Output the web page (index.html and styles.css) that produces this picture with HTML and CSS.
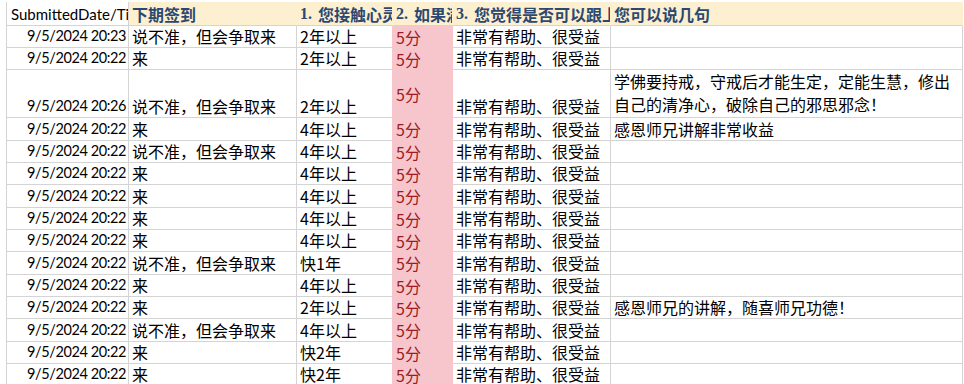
FILE: index.html
```html
<!DOCTYPE html>
<html lang="zh-CN">
<head>
    <meta charset="UTF-8">
    <meta name="viewport" content="width=device-width, initial-scale=1.0">
    <title>签到反馈</title>
    <link rel="stylesheet" href="styles.css">
</head>
<body>
    <div class="sheet">
        <div class="row head">
            <div class="cell date">SubmittedDate/Time</div>
            <div class="cell">下期签到</div>
            <div class="cell"><span class="num">1.</span>您接触心灵法门多久了？</div>
            <div class="cell"><span class="num">2.</span>如果满分是5分</div>
            <div class="cell"><span class="num">3.</span>您觉得是否可以跟上</div>
            <div class="cell">您可以说几句</div>
        </div>

        <div class="row r22">
            <div class="cell date">9/5/2024 20:23</div>
            <div class="cell">说不准，但会争取来</div>
            <div class="cell">2年以上</div>
            <div class="cell score">5分</div>
            <div class="cell">非常有帮助、很受益</div>
            <div class="cell"></div>
        </div>
        <div class="row r22">
            <div class="cell date">9/5/2024 20:22</div>
            <div class="cell">来</div>
            <div class="cell">2年以上</div>
            <div class="cell score">5分</div>
            <div class="cell">非常有帮助、很受益</div>
            <div class="cell"></div>
        </div>
        <div class="row tall">
            <div class="cell date">9/5/2024 20:26</div>
            <div class="cell">说不准，但会争取来</div>
            <div class="cell">2年以上</div>
            <div class="cell score">5分</div>
            <div class="cell">非常有帮助、很受益</div>
            <div class="cell wrap">学佛要持戒，守戒后才能生定，定能生慧，修出自己的清净心，破除自己的邪思邪念！</div>
        </div>
        <div class="row r23">
            <div class="cell date">9/5/2024 20:22</div>
            <div class="cell">来</div>
            <div class="cell">4年以上</div>
            <div class="cell score">5分</div>
            <div class="cell">非常有帮助、很受益</div>
            <div class="cell">感恩师兄讲解非常收益</div>
        </div>
        <div class="row r22">
            <div class="cell date">9/5/2024 20:22</div>
            <div class="cell">说不准，但会争取来</div>
            <div class="cell">4年以上</div>
            <div class="cell score">5分</div>
            <div class="cell">非常有帮助、很受益</div>
            <div class="cell"></div>
        </div>
        <div class="row r22">
            <div class="cell date">9/5/2024 20:22</div>
            <div class="cell">来</div>
            <div class="cell">4年以上</div>
            <div class="cell score">5分</div>
            <div class="cell">非常有帮助、很受益</div>
            <div class="cell"></div>
        </div>
        <div class="row r23">
            <div class="cell date">9/5/2024 20:22</div>
            <div class="cell">来</div>
            <div class="cell">4年以上</div>
            <div class="cell score">5分</div>
            <div class="cell">非常有帮助、很受益</div>
            <div class="cell"></div>
        </div>
        <div class="row r22">
            <div class="cell date">9/5/2024 20:22</div>
            <div class="cell">来</div>
            <div class="cell">4年以上</div>
            <div class="cell score">5分</div>
            <div class="cell">非常有帮助、很受益</div>
            <div class="cell"></div>
        </div>
        <div class="row r22">
            <div class="cell date">9/5/2024 20:22</div>
            <div class="cell">来</div>
            <div class="cell">4年以上</div>
            <div class="cell score">5分</div>
            <div class="cell">非常有帮助、很受益</div>
            <div class="cell"></div>
        </div>
        <div class="row r23">
            <div class="cell date">9/5/2024 20:22</div>
            <div class="cell">说不准，但会争取来</div>
            <div class="cell">快1年</div>
            <div class="cell score">5分</div>
            <div class="cell">非常有帮助、很受益</div>
            <div class="cell"></div>
        </div>
        <div class="row r22">
            <div class="cell date">9/5/2024 20:22</div>
            <div class="cell">来</div>
            <div class="cell">4年以上</div>
            <div class="cell score">5分</div>
            <div class="cell">非常有帮助、很受益</div>
            <div class="cell"></div>
        </div>
        <div class="row r22">
            <div class="cell date">9/5/2024 20:22</div>
            <div class="cell">来</div>
            <div class="cell">2年以上</div>
            <div class="cell score">5分</div>
            <div class="cell">非常有帮助、很受益</div>
            <div class="cell">感恩师兄的讲解，随喜师兄功德！</div>
        </div>
        <div class="row r23">
            <div class="cell date">9/5/2024 20:22</div>
            <div class="cell">说不准，但会争取来</div>
            <div class="cell">4年以上</div>
            <div class="cell score">5分</div>
            <div class="cell">非常有帮助、很受益</div>
            <div class="cell"></div>
        </div>
        <div class="row r22">
            <div class="cell date">9/5/2024 20:22</div>
            <div class="cell">来</div>
            <div class="cell">快2年</div>
            <div class="cell score">5分</div>
            <div class="cell">非常有帮助、很受益</div>
            <div class="cell"></div>
        </div>
        <div class="row r22">
            <div class="cell date">9/5/2024 20:22</div>
            <div class="cell">来</div>
            <div class="cell">快2年</div>
            <div class="cell score">5分</div>
            <div class="cell">非常有帮助、很受益</div>
            <div class="cell"></div>
        </div>
    </div>
</body>
</html>
```

FILE: styles.css
```css
body {
    margin: 0;
    background: #fff;
    font-family: "Noto Sans CJK TC", sans-serif;
    font-size: 16px;
    color: #000;
    overflow: hidden;
}
.sheet {
    padding: 2px 0 0 6px;
}
.row {
    display: grid;
    grid-template-columns: 122px 168px 96px 60px 158px 353px;
    height: 22px;
}
.row.r23 {
    height: 23px;
}
.row.tall {
    height: 48px;
}
.row.head {
    height: 24px;
}
.cell {
    box-sizing: border-box;
    display: flex;
    align-items: flex-end;
    padding: 0 3px 0 3px;
    line-height: 22px;
    border-left: 1px solid #d4d4d4;
    border-bottom: 1px solid #d4d4d4;
    white-space: nowrap;
    overflow: hidden;
}
.cell:last-child {
    border-right: 1px solid #d4d4d4;
}
.date {
    justify-content: flex-end;
    font-family: Lato, "Noto Sans CJK SC", sans-serif;
    font-size: 14.5px;
    letter-spacing: -0.4px;
    padding-right: 2px;
}
.head .cell {
    background: #fdf0d0;
    color: #2c4870;
    font-weight: 700;
    font-family: "Noto Sans CJK SC", sans-serif;
    border-left-color: #fdf0d0;
}
.head .cell:first-child {
    background: #fff;
    color: #000;
    font-weight: 400;
    font-family: Lato, sans-serif;
    font-size: 15px;
    letter-spacing: 0;
    border-left-color: #d4d4d4;
    justify-content: flex-start;
    padding-left: 4px;
}
.head .cell:nth-child(2) {
    border-left-color: #d4d4d4;
}
.head .cell:last-child {
    border-right-color: #fdf0d0;
}
.num {
    font-family: "Liberation Serif", serif;
    margin-right: 6px;
}
.score {
    background: #f7c6cd;
    color: #9c1c22;
    align-items: center;
    border-left-color: #f7c6cd;
    border-bottom-color: #f7c6cd;
}
.score + .cell {
    border-left-color: #f7c6cd;
}
.wrap {
    white-space: normal;
    line-height: 23px;
    align-items: flex-start;
    padding-top: 0;
}
```
